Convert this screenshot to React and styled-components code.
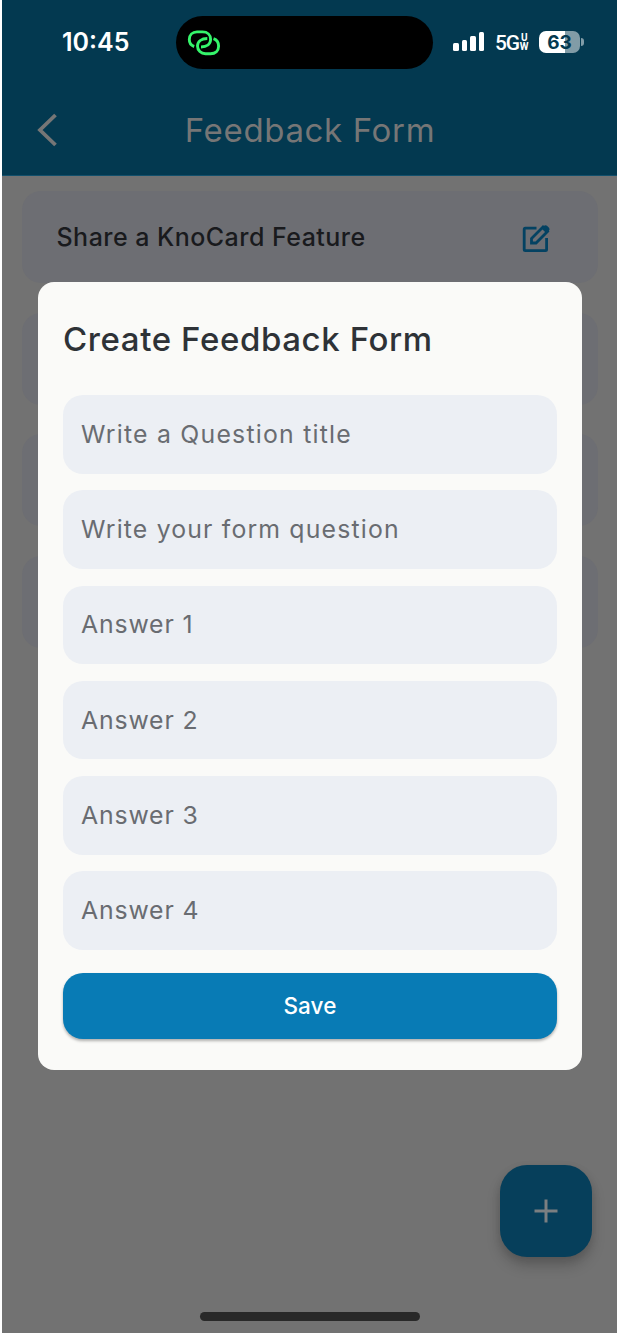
import React from 'react';
import styled, { createGlobalStyle } from 'styled-components';

const Global = createGlobalStyle`
  * { box-sizing: border-box; }
  body { margin: 0; background: #fff; font-family: Inter, "Liberation Sans", sans-serif; }
`;

const Screen = styled.div`
  position: relative;
  display: flex;
  flex-direction: column;
  width: 615px;
  height: 1333px;
  margin-left: 2px;
  background: #727272;
  overflow: hidden;
  box-shadow: 0 1px 0 #cfcfcf;
`;

const Header = styled.header`
  height: 176px;
  background: #033950;
  border-bottom: 1px solid #12506c;
`;

const StatusBar = styled.div`
  display: flex;
  align-items: center;
  height: 53px;
  margin-top: 16px;
  padding-left: 60px;
  color: #fff;
`;

const Clock = styled.div`
  width: 113.5px;
  padding-bottom: 1px;
  font-size: 25px;
  font-weight: 600;
  letter-spacing: 0;
  white-space: nowrap;
`;

const Island = styled.div`
  display: flex;
  align-items: center;
  width: 257.5px;
  height: 53px;
  padding-left: 11.5px;
  border-radius: 27px;
  background: #000;
`;

const Signal = styled.div`
  display: flex;
  align-items: flex-end;
  gap: 3px;
  width: 42px;
  margin-left: 20px;
  padding-bottom: 2px;
`;

const Bar = styled.i`
  width: 5.5px;
  height: ${(p) => p.$h}px;
  border-radius: 1.5px;
  background: #fff;
`;

const Network = styled.div`
  display: flex;
  align-items: center;
  gap: 1px;
  width: 44px;
  font-family: Roboto, sans-serif;
  font-size: 21px;
  font-weight: 500;
  line-height: 22px;
  letter-spacing: -1.2px;
`;

const NetworkSuffix = styled.span`
  display: flex;
  flex-direction: column;
  font-size: 10px;
  font-weight: 700;
  line-height: 8.5px;
  text-align: center;
  letter-spacing: 0;
`;

const Battery = styled.div`
  display: flex;
  align-items: center;
  gap: 1px;
  padding-bottom: 1px;
`;

const BatteryBody = styled.div`
  width: 41px;
  height: 22px;
  border-radius: 7px;
  background: linear-gradient(90deg, #fff 63%, #819ca7 63%);
  color: #033950;
  font-size: 19px;
  font-weight: 700;
  line-height: 23px;
  text-align: center;
`;

const BatteryTip = styled.i`
  width: 3px;
  height: 8px;
  border-radius: 0 4px 4px 0;
  background: #819ca7;
`;

const TitleBar = styled.div`
  display: grid;
  grid-template-columns: 92px 1fr 92px;
  align-items: center;
  height: 60px;
  margin-top: 31px;
  color: #767676;
`;

const BackButton = styled.button`
  display: flex;
  padding: 0 0 0 34px;
  border: 0;
  background: none;
  color: inherit;
`;

const PageTitle = styled.h1`
  margin: 0;
  padding-left: 1px;
  font-size: 33px;
  font-weight: 400;
  letter-spacing: 0.65px;
  text-align: center;
  white-space: nowrap;
`;

const CardList = styled.main`
  display: flex;
  flex-direction: column;
  gap: 29.5px;
  padding: 15px 19px 0 20px;
`;

const Card = styled.article`
  display: flex;
  align-items: center;
  justify-content: space-between;
  height: 92px;
  padding: 0 47.5px 0 34.5px;
  border-radius: 19px;
  background: #6d6e73;
  color: #191a1d;
  font-size: 25px;
  font-weight: 500;
  letter-spacing: 0.47px;
`;

const AddButton = styled.button`
  position: absolute;
  right: 25.5px;
  bottom: 76.5px;
  display: flex;
  align-items: center;
  justify-content: center;
  width: 92px;
  height: 92px;
  padding: 0;
  border: 0;
  border-radius: 27px;
  background: #063f5b;
  box-shadow: 0 9px 14px rgba(0, 0, 0, 0.18), 0 3px 8px rgba(0, 0, 0, 0.1);
`;

const HomeIndicator = styled.div`
  position: absolute;
  left: 198px;
  bottom: 12px;
  width: 220px;
  height: 9px;
  border-radius: 5px;
  background: #292929;
`;

const Dialog = styled.form`
  position: absolute;
  top: 281.5px;
  left: 36.3px;
  width: 543.3px;
  height: 788.5px;
  padding: 37px 24.6px 0 24.7px;
  border-radius: 16px;
  background: #fafaf8;
`;

const DialogTitle = styled.h2`
  height: 76.5px;
  margin: 0;
  color: #2e3237;
  font-size: 33px;
  font-weight: 500;
  line-height: 40px;
  letter-spacing: 0.6px;
  white-space: nowrap;
`;

const Fields = styled.div`
  display: flex;
  flex-direction: column;
  gap: 16.7px;
`;

const Field = styled.input`
  display: block;
  width: 100%;
  height: 78.6px;
  padding: 0 18px 1px;
  border: 0;
  border-radius: 20px;
  outline: 0;
  background: #eceff4;
  color: #2e3237;
  font-family: inherit;
  font-size: 24.8px;
  letter-spacing: ${(p) => p.$tracking}px;
  &::placeholder { color: #696c71; opacity: 1; }
`;

const SaveButton = styled.button`
  display: block;
  width: 100%;
  height: 66px;
  margin-top: 23px;
  padding: 0 0 1px;
  border: 0;
  border-radius: 20px;
  background: #087bb5;
  box-shadow: 0 2px 3px rgba(0, 0, 0, 0.3);
  color: #fff;
  font-family: inherit;
  font-size: 22.5px;
  font-weight: 500;
  letter-spacing: 0.1px;
`;

const LinkIcon = () => (
  <svg width="34" height="28" viewBox="0 0 34 28" fill="none" stroke="#35f56b" strokeWidth="2.9">
    <path d="M7.200 17.500C4.200 16.500 2.300 13.500 2.300 10.500C2.300 6 5.500 2.900 10 2.900H15.500C20.500 2.900 23.600 6 23.600 10.300C23.600 14.800 20 18 14 18" />
    <path d="M20.300 9.500C14.500 9.500 10.500 12.500 10.500 17C10.500 21.500 14 24.700 18.500 24.700H23.500C28.500 24.700 31.600 21.500 31.600 17.300C31.600 13.800 29.800 10.800 26.500 9.700" />
  </svg>
);

const EditIcon = () => (
  <svg width="30" height="33" viewBox="0 -3 30 33" fill="none" stroke="#044262" strokeWidth="2.8">
    <path d="M15.500 4.200H4.300Q3.200 4.200 3.200 5.300V25.500Q3.200 26.600 4.300 26.600H24.500Q25.600 26.600 25.600 25.500V14" />
    <path d="M10.500 19V14.500L22 3L26.500 7.500L15 19Z" />
    <path d="M20.500 4.500L23 1.800Q24.500 0.500 26 1.800L28 3.800Q29.200 5.200 28 6.600L25.400 9.200Z" fill="#044262" stroke="none" />
  </svg>
);

const FIELDS = [
  { text: 'Write a Question title', tracking: 1.23 },
  { text: 'Write your form question', tracking: 1.17 },
  { text: 'Answer 1', tracking: 0.85 },
  { text: 'Answer 2', tracking: 0.85 },
  { text: 'Answer 3', tracking: 0.85 },
  { text: 'Answer 4', tracking: 0.85 },
];

export default function App() {
  return (
    <>
      <Global />
      <Screen>
        <Header>
          <StatusBar>
            <Clock>10:45</Clock>
            <Island><LinkIcon /></Island>
            <Signal>
              {[8, 11, 15, 19].map((h) => <Bar key={h} $h={h} />)}
            </Signal>
            <Network>5G<NetworkSuffix><span>U</span><span>W</span></NetworkSuffix></Network>
            <Battery><BatteryBody>63</BatteryBody><BatteryTip /></Battery>
          </StatusBar>
          <TitleBar>
            <BackButton type="button" aria-label="Back">
              <svg width="22" height="34" viewBox="0 0 22 34" fill="none" stroke="#767676" strokeWidth="3.800">
                <path d="M19.500 2L4 17L19.500 32" />
              </svg>
            </BackButton>
            <PageTitle>Feedback Form</PageTitle>
          </TitleBar>
        </Header>
        <CardList>
          <Card><span>Share a KnoCard Feature</span><EditIcon /></Card>
          <Card />
          <Card />
          <Card />
        </CardList>
        <AddButton type="button" aria-label="Add">
          <svg width="24" height="24" viewBox="0 0 24 24" stroke="#7b7f81" strokeWidth="3">
            <path d="M12 0.500V23.500M0.500 12H23.500" />
          </svg>
        </AddButton>
        <HomeIndicator />
        <Dialog>
          <DialogTitle>Create Feedback Form</DialogTitle>
          <Fields>
            {FIELDS.map(({ text, tracking }) => (
              <Field key={text} placeholder={text} $tracking={tracking} />
            ))}
          </Fields>
          <SaveButton type="button">Save</SaveButton>
        </Dialog>
      </Screen>
    </>
  );
}
